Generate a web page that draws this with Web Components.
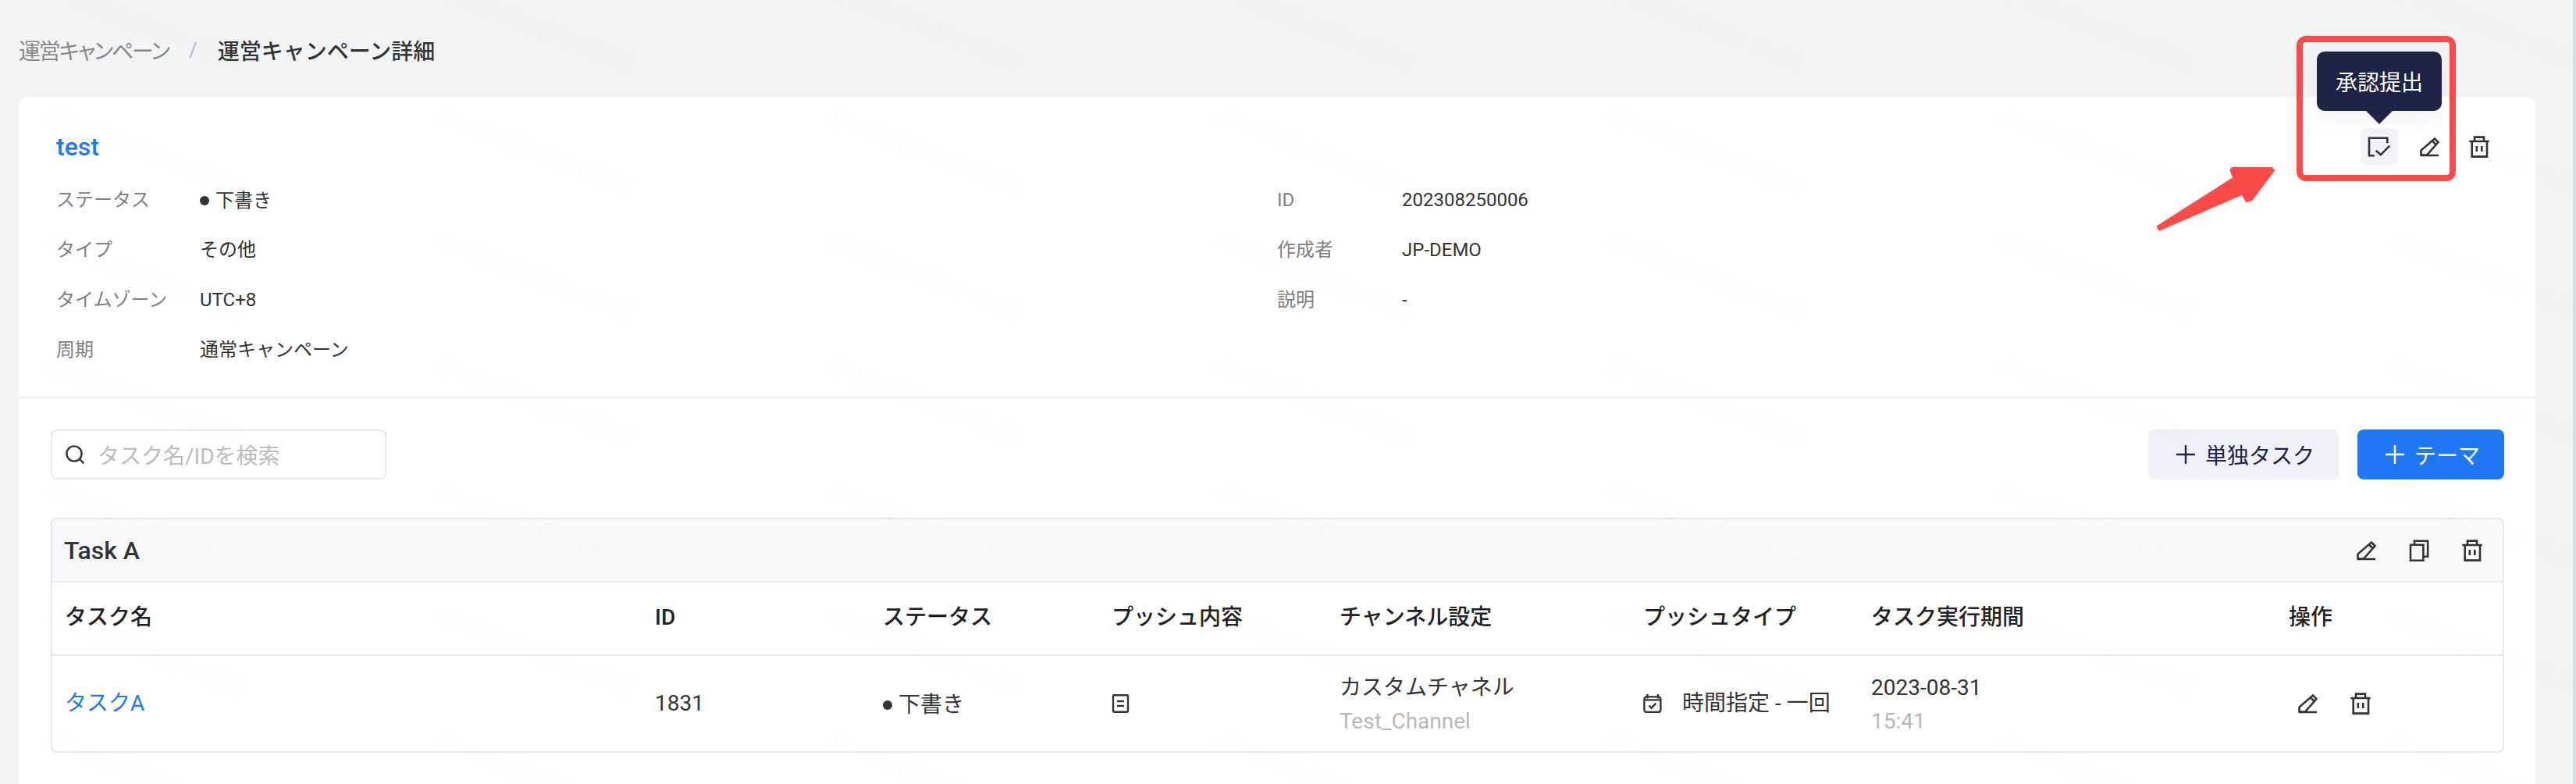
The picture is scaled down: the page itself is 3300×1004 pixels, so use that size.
<!DOCTYPE html>
<html lang="ja">
  <head>
    <meta charset="UTF-8" />
    <title>運営キャンペーン詳細</title>
    <style>
      html,
      body {
        margin: 0;
        height: 100%;
        overflow: hidden;
      }
      body {
        font-family: Roboto, 'Noto Sans CJK JP', sans-serif;
        font-size: 24px;
        color: #333;
        background: #f2f3f5;
      }
    </style>
  </head>
  <body>
    <campaign-page>
      <bread-crumb slot="crumb">
        <span slot="parent">運営キャンペーン</span>
        <span slot="current">運営キャンペーン詳細</span>
      </bread-crumb>

      <campaign-info slot="info" name="test">
        <icon-button slot="actions" icon="submit" tip="承認提出" active></icon-button>
        <icon-button slot="actions" icon="pencil"></icon-button>
        <icon-button slot="actions" icon="trash"></icon-button>

        <info-item slot="left" label="ステータス"><draft-status>下書き</draft-status></info-item>
        <info-item slot="left" label="タイプ">その他</info-item>
        <info-item slot="left" label="タイムゾーン">UTC+8</info-item>
        <info-item slot="left" label="周期">通常キャンペーン</info-item>

        <info-item slot="right" label="ID" short>202308250006</info-item>
        <info-item slot="right" label="作成者" short>JP-DEMO</info-item>
        <info-item slot="right" label="説明" short>-</info-item>
      </campaign-info>

      <task-toolbar slot="toolbar">
        <search-box slot="search">タスク名/IDを検索</search-box>
        <plus-button slot="buttons">単独タスク</plus-button>
        <plus-button slot="buttons" primary>テーマ</plus-button>
      </task-toolbar>

      <task-group slot="table" name="Task A">
        <icon-button slot="actions" icon="pencil" small></icon-button>
        <icon-button slot="actions" icon="copy" small></icon-button>
        <icon-button slot="actions" icon="trash" small></icon-button>

        <task-cell slot="head">タスク名</task-cell>
        <task-cell slot="head">ID</task-cell>
        <task-cell slot="head">ステータス</task-cell>
        <task-cell slot="head">プッシュ内容</task-cell>
        <task-cell slot="head">チャンネル設定</task-cell>
        <task-cell slot="head">プッシュタイプ</task-cell>
        <task-cell slot="head">タスク実行期間</task-cell>
        <task-cell slot="head">操作</task-cell>

        <task-cell slot="row" link>タスクA</task-cell>
        <task-cell slot="row">1831</task-cell>
        <task-cell slot="row"><draft-status>下書き</draft-status></task-cell>
        <task-cell slot="row"><app-icon name="doc" size="24"></app-icon></task-cell>
        <task-cell slot="row">
          <stack-text>カスタムチャネル<span slot="sub">Test_Channel</span></stack-text>
        </task-cell>
        <task-cell slot="row">
          <icon-text><app-icon slot="icon" name="calendar" size="24"></app-icon>時間指定 - 一回</icon-text>
        </task-cell>
        <task-cell slot="row">
          <stack-text>2023-08-31<span slot="sub">15:41</span></stack-text>
        </task-cell>
        <task-cell slot="row">
          <row-actions>
            <icon-button icon="pencil" small></icon-button>
            <icon-button icon="trash" small></icon-button>
          </row-actions>
        </task-cell>
      </task-group>
    </campaign-page>

    <script>
      const ICONS = {
        pencil:
          '<path d="M5.5 26.5v-6L23 5.5l4.5 4.5L13 26.5zM20 8.5l4.5 4.5M5 27h23"/>',
        trash:
          '<path d="M3.3 9h25.4M10 9V3.6h12V9M6.7 9v19.6h19.3V9M12.8 15v7M19.3 15v7"/>',
        submit:
          '<path d="M9.7 27.3H3V4.7h23.3v6.6M11.7 20.7l6 5.6 11.6-11.6"/>',
        copy: '<path d="M5 8.7h16.4v20H5zM10 8.7v-5h17.1v20h-5.7"/>',
        doc: '<rect x="2" y="1.2" width="19" height="21.6" rx="1.5"/><path d="M7 9h9M7 15h9"/>',
        calendar:
          '<rect x="1.4" y="3.4" width="21" height="19.6" rx="3"/><path d="M5.5 0v5.5M19 0v5.5M1.4 7.4h21M7.5 14.5l3 3.2 5.8-6"/>',
        search: '<circle cx="11" cy="11" r="9.6"/><path d="M18 18l5.4 5.4"/>',
        plus: '<path d="M12 0v24M0 12h24"/>',
      }

      // 按名字画 svg 图标
      class AppIcon extends HTMLElement {
        connectedCallback() {
          const name = this.getAttribute('name')
          const size = this.getAttribute('size') || 32
          const stroke = this.getAttribute('stroke') || (size == 32 ? 2.6 : 2.4)
          const root = this.shadowRoot || this.attachShadow({ mode: 'open' })
          root.innerHTML = `
            <style>
              :host { display: block; width: ${size}px; height: ${size}px; }
              svg { display: block; fill: none; stroke: currentColor; stroke-width: ${stroke}; }
            </style>
            <svg width="${size}" height="${size}" viewBox="0 0 ${size} ${size}">${ICONS[name]}</svg>`
        }
      }

      class CampaignPage extends HTMLElement {
        constructor() {
          super()
          this.attachShadow({ mode: 'open' }).innerHTML = `
            <style>
              :host { display: flex; height: 100vh; position: relative; overflow: hidden; }
              .main { flex: 1; min-width: 0; display: flex; flex-direction: column; padding: 0 48px 0 24px; }
              .card { flex: 1; background: #fff; border-radius: 12px 12px 0 0; }
              .bar { width: 4px; background: #d6dee1; }
              .frame { position: absolute; left: 0; top: 0; pointer-events: none; }
            </style>
            <div class="main">
              <slot name="crumb"></slot>
              <div class="card">
                <slot name="info"></slot>
                <slot name="toolbar"></slot>
                <slot name="table"></slot>
              </div>
            </div>
            <div class="bar"></div>
            <svg class="frame" width="3300" height="1004">
              <defs>
                <pattern id="wm" width="500" height="160" patternUnits="userSpaceOnUse" patternTransform="translate(0 110)">
                  <text transform="translate(55 45) rotate(21)" font-size="28" fill="rgba(0,0,0,.007)">JP-DEMO 0052 08-25</text>
                </pattern>
              </defs>
              <rect width="3300" height="1004" fill="url(#wm)"/>
              <rect x="2946" y="50" width="196" height="178" rx="8" fill="none" stroke="#f94c48" stroke-width="8"/>
              <polygon points="2764.5,290 2766.5,294 2872.5,248 2878,257.5 2884,256 2912.5,218 2910,215.5 2860,215.5 2858,218 2862,228"
                fill="#f94c48" stroke="#f94c48" stroke-width="3" stroke-linejoin="round"/>
            </svg>`
        }
      }

      class BreadCrumb extends HTMLElement {
        constructor() {
          super()
          this.attachShadow({ mode: 'open' }).innerHTML = `
            <style>
              :host { display: flex; align-items: center; height: 124px; padding-top: 4px; box-sizing: border-box; font-size: 28px; }
              .parent { color: #888; font-feature-settings: "palt"; letter-spacing: -2.2px; }
              .sep { color: #b5bad0; margin: 0 26px; font-size: 26px; }
              .current { color: #333; font-weight: 500; }
            </style>
            <span class="parent"><slot name="parent"></slot></span>
            <span class="sep">/</span>
            <span class="current"><slot name="current"></slot></span>`
        }
      }

      class CampaignInfo extends HTMLElement {
        connectedCallback() {
          this.attachShadow({ mode: 'open' }).innerHTML = `
            <style>
              :host { display: block; padding: 40px 48px 28px; border-bottom: 2px solid #e8e9ef; }
              .top { display: flex; justify-content: space-between; align-items: center; height: 48px; margin-bottom: 12px; }
              .name { font-size: 32px; font-weight: 500; color: #1f78f2; }
              .acts { display: flex; gap: 16px; }
              .cols { display: grid; grid-template-columns: 1fr 1fr; }
            </style>
            <div class="top">
              <span class="name">${this.getAttribute('name')}</span>
              <div class="acts"><slot name="actions"></slot></div>
            </div>
            <div class="cols">
              <div><slot name="left"></slot></div>
              <div><slot name="right"></slot></div>
            </div>`
        }
      }

      class InfoItem extends HTMLElement {
        connectedCallback() {
          const labelWidth = this.hasAttribute('short') ? 160 : 184
          this.attachShadow({ mode: 'open' }).innerHTML = `
            <style>
              :host { display: flex; align-items: center; height: 64px; font-size: 24px; line-height: 32px; }
              .label { width: ${labelWidth}px; flex: none; color: #808080; }
            </style>
            <span class="label">${this.getAttribute('label')}</span>
            <span><slot></slot></span>`
        }
      }

      class DraftStatus extends HTMLElement {
        constructor() {
          super()
          this.attachShadow({ mode: 'open' }).innerHTML = `
            <style>
              :host { display: inline-flex; align-items: center; gap: 8px; }
              i { width: 12px; height: 12px; border-radius: 50%; background: #333; }
            </style>
            <i></i><slot></slot>`
        }
      }

      class IconButton extends HTMLElement {
        connectedCallback() {
          const small = this.hasAttribute('small')
          const tip = this.getAttribute('tip')
          this.attachShadow({ mode: 'open' }).innerHTML = `
            <style>
              :host { display: flex; align-items: center; justify-content: center; position: relative;
                width: ${small ? 32 : 48}px; height: ${small ? 32 : 48}px; border-radius: 8px; color: #333; }
              :host([active]) { background: #f2f3f7; }
              .tip { position: absolute; left: 50%; top: -98px; transform: translateX(-50%); padding: 0 24px; height: 76px;
                display: flex; align-items: center; white-space: nowrap; font-size: 28px; color: #fff;
                background: #202346; border-radius: 10px; box-shadow: 0 8px 24px rgba(0, 0, 0, .06); }
              .tip::after { content: ''; position: absolute; left: 50%; top: 76px; margin-left: -17px;
                border: solid transparent; border-width: 17px 17px 0; border-top-color: #202346; }
            </style>
            <app-icon name="${this.getAttribute('icon')}"></app-icon>
            ${tip ? `<div class="tip">${tip}</div>` : ''}`
        }
      }

      class TaskToolbar extends HTMLElement {
        constructor() {
          super()
          this.attachShadow({ mode: 'open' }).innerHTML = `
            <style>
              :host { display: flex; justify-content: space-between; padding: 40px 40px 49px 41px; }
              .btns { display: flex; gap: 24px; }
            </style>
            <slot name="search"></slot>
            <div class="btns"><slot name="buttons"></slot></div>`
        }
      }

      class SearchBox extends HTMLElement {
        constructor() {
          super()
          this.attachShadow({ mode: 'open' }).innerHTML = `
            <style>
              :host { display: flex; align-items: center; gap: 17px; box-sizing: border-box; width: 430px; height: 64px;
                padding-left: 17px; border: 2px solid #e6e8ef; border-radius: 8px; font-size: 28px; color: #bbb; }
              app-icon { color: #333; }
            </style>
            <app-icon name="search" size="24"></app-icon>
            <slot></slot>`
        }
      }

      class PlusButton extends HTMLElement {
        constructor() {
          super()
          this.attachShadow({ mode: 'open' }).innerHTML = `
            <style>
              :host { display: flex; align-items: center; gap: 13px; height: 64px; padding: 0 31px 0 36px; border-radius: 8px;
                font-size: 28px; color: #20224a; background: #f0f1f7; }
              :host([primary]) { color: #fff; background: #1f78f2; }
            </style>
            <app-icon name="plus" size="24"></app-icon>
            <slot></slot>`
        }
      }

      class TaskGroup extends HTMLElement {
        connectedCallback() {
          const columns = '756px 292px 293px 292px 389px 292px 535px 1fr'
          this.attachShadow({ mode: 'open' }).innerHTML = `
            <style>
              :host { display: block; margin: 0 40px 0 41px; border: 2px solid #e6e8ef; border-radius: 8px; overflow: hidden; }
              .head { display: flex; justify-content: space-between; align-items: center; box-sizing: border-box; height: 81px;
                padding: 0 23px 0 15px; background: #f8f8fb; border-bottom: 2px solid #ebebf1; }
              .name { font-size: 32px; font-weight: 500; }
              .acts { display: flex; gap: 36px; }
              .line { display: grid; grid-template-columns: ${columns}; align-items: center; }
              .titles { height: 94px; box-sizing: border-box; padding-bottom: 2px; border-bottom: 2px solid #ebebf1; font-weight: 500; color: #222; }
              .row { height: 122px; box-sizing: border-box; }
            </style>
            <div class="head">
              <span class="name">${this.getAttribute('name')}</span>
              <div class="acts"><slot name="actions"></slot></div>
            </div>
            <div class="line titles"><slot name="head"></slot></div>
            <div class="line row"><slot name="row"></slot></div>`
        }
      }

      class TaskCell extends HTMLElement {
        constructor() {
          super()
          this.attachShadow({ mode: 'open' }).innerHTML = `
            <style>
              :host { display: block; padding-left: 16px; font-size: 28px; line-height: 40px; white-space: nowrap; }
              :host([link]) { color: #1f78f2; }
            </style>
            <slot></slot>`
        }
      }

      class StackText extends HTMLElement {
        constructor() {
          super()
          this.attachShadow({ mode: 'open' }).innerHTML = `
            <style>
              :host { display: flex; flex-direction: column; line-height: 46px; }
              .main { padding-top: 3px; }
              .sub { color: #b8b8b8; margin-top: -3px; }
            </style>
            <div class="main"><slot></slot></div>
            <div class="sub"><slot name="sub"></slot></div>`
        }
      }

      class IconText extends HTMLElement {
        constructor() {
          super()
          this.attachShadow({ mode: 'open' }).innerHTML = `
            <style>
              :host { display: flex; align-items: center; gap: 26px; }
            </style>
            <slot name="icon"></slot>
            <span><slot></slot></span>`
        }
      }

      class RowActions extends HTMLElement {
        constructor() {
          super()
          this.attachShadow({ mode: 'open' }).innerHTML = `
            <style>
              :host { display: flex; gap: 36px; padding-left: 8px; }
            </style>
            <slot></slot>`
        }
      }

      customElements.define('app-icon', AppIcon)
      customElements.define('campaign-page', CampaignPage)
      customElements.define('bread-crumb', BreadCrumb)
      customElements.define('campaign-info', CampaignInfo)
      customElements.define('info-item', InfoItem)
      customElements.define('draft-status', DraftStatus)
      customElements.define('icon-button', IconButton)
      customElements.define('task-toolbar', TaskToolbar)
      customElements.define('search-box', SearchBox)
      customElements.define('plus-button', PlusButton)
      customElements.define('task-group', TaskGroup)
      customElements.define('task-cell', TaskCell)
      customElements.define('stack-text', StackText)
      customElements.define('icon-text', IconText)
      customElements.define('row-actions', RowActions)
    </script>
  </body>
</html>
